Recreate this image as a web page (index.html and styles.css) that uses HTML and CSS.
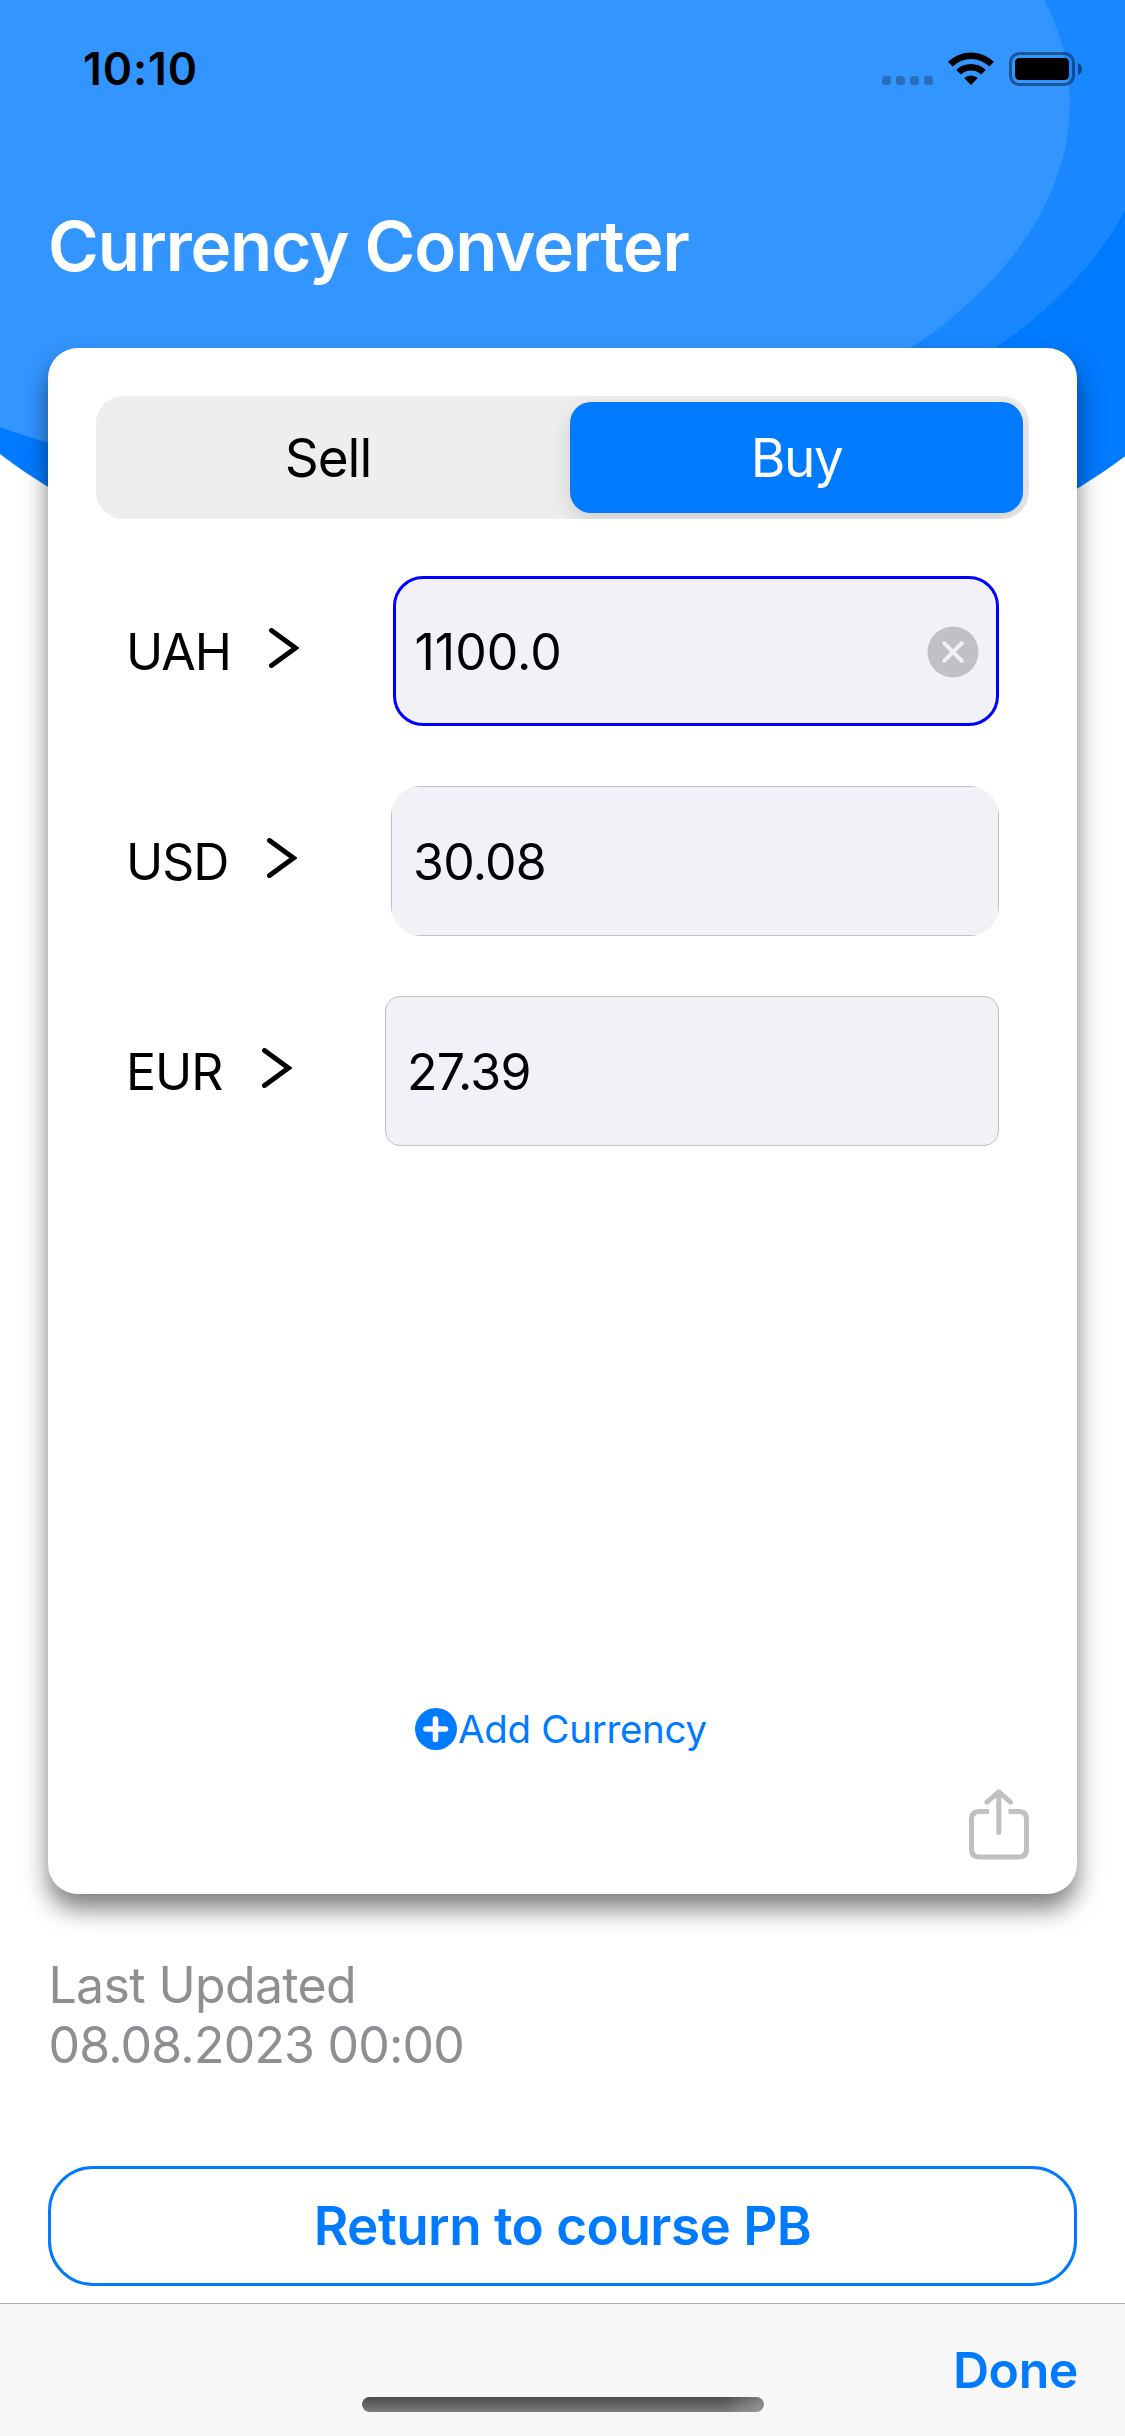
FILE: index.html
```html
<!DOCTYPE html>
<html lang="en">
<head>
<meta charset="utf-8">
<title>Currency Converter</title>
<link rel="stylesheet" href="styles.css">
</head>
<body>
<div class="screen">
  <svg class="backdrop" width="1125" height="640" viewBox="0 0 1125 640" aria-hidden="true">
    <path d="M-131 0H1259V229A695 385 0 0 1 -131 229Z" fill="#007aff"/>
    <ellipse cx="457" cy="104" rx="695" ry="385" fill="#1987ff" clip-path="url(#base)"/>
    <ellipse cx="375" cy="103" rx="695" ry="385" fill="#3395ff"/>
    <clipPath id="base"><path d="M-131 0H1259V229A695 385 0 0 1 -131 229Z"/></clipPath>
  </svg>

  <header class="status">
    <span class="time">10:10</span>
    <span class="status-icons">
      <svg class="dots" width="51" height="9" viewBox="0 0 51 9" fill="#000" fill-opacity=".25">
        <rect width="9" height="9" rx="3"/><rect x="14" width="9" height="9" rx="3"/><rect x="28" width="9" height="9" rx="3"/><rect x="42" width="9" height="9" rx="3"/>
      </svg>
      <svg class="wifi" width="46" height="33" viewBox="0 0 46 33">
        <path d="M0 9.8A33 33 0 0 1 46 9.8L41.3 14.5A26.3 26.3 0 0 0 4.7 14.5Z"/>
        <path d="M8.2 18A21.4 21.4 0 0 1 37.8 18L33.1 22.6A14.8 14.8 0 0 0 12.9 22.6Z"/>
        <path d="M16.2 26A10.3 10.3 0 0 1 29.8 26L23 33Z"/>
      </svg>
      <svg class="battery" width="73" height="34" viewBox="0 0 73 34">
        <rect x="1.5" y="1.5" width="63" height="31" rx="9" fill="none" stroke="#000" stroke-opacity=".42" stroke-width="3"/>
        <rect x="6" y="6" width="54" height="22" rx="4.5"/>
        <path d="M69 11Q73 13 73 17T69 23Z" fill-opacity=".5"/>
      </svg>
    </span>
  </header>

  <h1 class="title">Currency Converter</h1>

  <main class="card">
    <div class="segments">
      <div class="segment sell">Sell</div>
      <div class="segment selected">Buy</div>
    </div>

    <div class="rows">
      <div class="row row-uah">
        <span class="code">UAH</span>
        <svg class="chevron" width="30" height="40" viewBox="0 0 30 40"><path d="M2.5 2.5L26.5 20L2.5 37.5"/></svg>
        <div class="field active">
          <span class="amount">1100.0</span>
          <svg class="clear" width="52" height="52" viewBox="0 0 52 52"><circle cx="26" cy="26" r="25.5" fill="#c1c0c6"/><path d="M17.2 17.2L34.8 34.8M34.8 17.2L17.2 34.8" stroke="#f2f1f7" stroke-width="4" stroke-linecap="round"/></svg>
        </div>
      </div>
      <div class="row row-usd">
        <span class="code">USD</span>
        <svg class="chevron" width="30" height="40" viewBox="0 0 30 40"><path d="M2.5 2.5L26.5 20L2.5 37.5"/></svg>
        <div class="clip"><div class="field"><span class="amount">30.08</span></div></div>
      </div>
      <div class="row row-eur">
        <span class="code">EUR</span>
        <svg class="chevron" width="30" height="40" viewBox="0 0 30 40"><path d="M2.5 2.5L26.5 20L2.5 37.5"/></svg>
        <div class="field"><span class="amount">27.39</span></div>
      </div>
    </div>

    <div class="add">
      <svg width="42" height="42" viewBox="0 0 42 42"><circle cx="21" cy="21" r="21" fill="#007aff"/><path d="M20.5 11V31.5M11 21H30.5" stroke="#fff" stroke-width="5.6" stroke-linecap="round"/></svg>
      <span class="add-text">Add Currency</span>
    </div>

    <svg class="share" width="60" height="71" viewBox="0 0 60 71" fill="none" stroke="#c0c0c0" stroke-width="5" stroke-linecap="round" stroke-linejoin="round">
      <path stroke-linecap="butt" d="M20 22.5H10.5Q2.5 22.5 2.5 30.5V60Q2.5 68 10.5 68H49.5Q57.5 68 57.5 60V30.5Q57.5 22.5 49.5 22.5H39.5"/>
      <path d="M29.8 3V43.5M18 13.2L29.8 2.8L41.5 13.2"/>
    </svg>
  </main>

  <div class="updated">
    <div class="updated-label">Last Updated</div>
    <div class="updated-date">08.08.2023 00:00</div>
  </div>

  <div class="return">Return to course PB</div>

  <footer class="toolbar">
    <span class="done">Done</span>
    <div class="home"></div>
  </footer>
</div>
</body>
</html>
```
FILE: styles.css
```css
* { box-sizing: border-box; }

body {
  margin: 0;
  background: #fff;
  color: #000;
  font-family: Inter, "Liberation Sans", sans-serif;
}

.screen {
  position: relative;
  display: flex;
  flex-direction: column;
  width: 1125px;
  height: 2436px;
  overflow: hidden;
  white-space: nowrap;
}

svg { display: block; flex: none; }

.backdrop { position: absolute; left: 0; top: 0; z-index: -1; }

.status {
  display: flex;
  justify-content: space-between;
  height: 138px;
  padding: 0 43px 0 83px;
}
.time { font-size: 44.5px; font-weight: 600; line-height: 138px; letter-spacing: 0.9px; }
.status-icons { display: flex; padding-top: 52px; }
.dots { margin-top: 24px; }
.wifi { margin: 0 15px; }

.title {
  margin: 60px 0 0 48px;
  height: 97px;
  line-height: 97px;
  font-size: 69px;
  font-weight: 600;
  letter-spacing: -1.15px;
  color: #fff;
}

.card {
  display: flex;
  flex-direction: column;
  height: 1546px;
  margin: 53px 48px 0;
  padding: 48px 48px 34px;
  border-radius: 30px;
  background: #fff;
  box-shadow: 0 15px 24px rgba(0, 0, 0, .5);
}

.segments {
  display: grid;
  grid-template-columns: 468px 453px;
  height: 123px;
  padding: 6px;
  border-radius: 27px;
  background: #eee;
  overflow: hidden;
}
.segment {
  display: flex;
  align-items: center;
  justify-content: center;
  font-size: 53px;
  letter-spacing: -1px;
}
.segment.sell { padding-right: 16px; }
.segment.selected {
  border-radius: 21px;
  background: #007aff;
  color: #fff;
  letter-spacing: -1.4px;
  box-shadow: 0 9px 24px rgba(0, 0, 0, .13);
}

.rows {
  display: flex;
  flex-direction: column;
  gap: 60px;
  margin: 57px 30px 0;
}
.row { display: flex; height: 150px; font-size: 50px; line-height: 152px; }
.code { flex: none; letter-spacing: -1px; }
.row-uah .code { width: 143px; }
.row-usd .code { width: 141px; }
.row-eur .code { width: 136px; }
.chevron { margin-top: 52px; fill: none; stroke: #000; stroke-width: 5; stroke-linecap: round; }
.row-uah .chevron { margin-right: 94px; }
.row-usd .chevron { margin-right: 94px; }
.row-eur .chevron { margin-right: 93px; }

.field {
  display: flex;
  flex: 1;
  align-items: center;
  justify-content: space-between;
  height: 150px;
  padding: 2px 20px 0 21px;
  border: 1px solid #c0c0c4;
  border-radius: 15px;
  background: #f2f1f7;
  letter-spacing: -0.75px;
}
.field.active {
  padding: 2px 17px 0 18.5px;
  border: 3px solid #00f;
  border-radius: 30px;
  letter-spacing: 0;
}
.clip { display: flex; flex: 1; border-radius: 30px; overflow: hidden; }

.add {
  display: flex;
  align-items: center;
  height: 42px;
  margin: auto 0 0 319px;
  font-size: 38.5px;
  letter-spacing: -0.3px;
  color: #007aff;
}
.add-text { margin-left: 1px; }

.share { margin: 39px 0 0 auto; }

.updated {
  margin: 61px 0 0 48.5px;
  font-size: 50px;
  line-height: 60px;
  letter-spacing: -0.65px;
  color: #8e8e93;
}
.updated-date { letter-spacing: -0.8px; }

.return {
  display: flex;
  align-items: center;
  justify-content: center;
  height: 120px;
  margin: 91px 48px 0;
  border: 3px solid #007aff;
  border-radius: 45px;
  font-size: 53px;
  font-weight: 600;
  letter-spacing: -0.5px;
  color: #007aff;
}

.toolbar {
  position: relative;
  display: flex;
  align-items: center;
  justify-content: flex-end;
  height: 133px;
  margin-top: 17px;
  padding-right: 47px;
  border-top: 1px solid #adadad;
  background: #f7f7f7;
}
.done { font-size: 50px; font-weight: 600; letter-spacing: -0.4px; color: #007aff; }
.home {
  position: absolute;
  left: 362px;
  top: 93px;
  width: 402px;
  height: 15px;
  border-radius: 8px;
  background: linear-gradient(90deg, transparent 90%, rgba(190, 190, 190, .45)), linear-gradient(#4b4b4b, #7c7c7c);
}
```
